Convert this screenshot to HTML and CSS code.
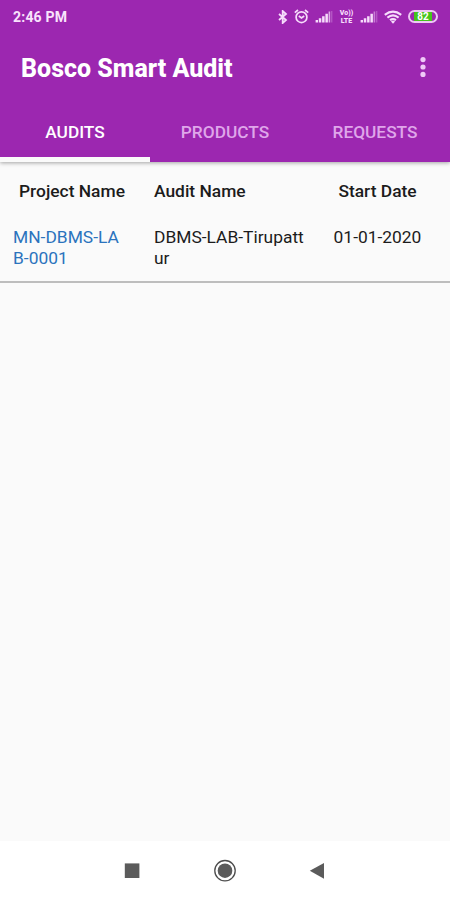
FILE: index.html
```html
<!DOCTYPE html>
<html lang="en">
<head>
    <meta charset="UTF-8">
    <title>Bosco Smart Audit</title>
    <link rel="stylesheet" href="styles.css">
</head>
<body>
    <header class="header">
        <div class="status-bar">
            <span class="time">2:46 PM</span>
            <div class="status-icons">
                <svg width="10" height="14" viewBox="0 0 10 14" fill="none" stroke="#f6dcfb" stroke-width="1.8"><path d="M1 4l7 6-3.3 3V1L8 4l-7 6"/></svg>
                <svg width="15" height="15" viewBox="0 0 15 15" fill="none" stroke="#f6dcfb" stroke-width="1.7"><circle cx="7.5" cy="8.2" r="5.4"/><path d="M.8 3.6L4 1M14.2 3.6L11 1M4.8 7l2.7 2 2.7-2"/></svg>
                <svg width="18" height="13" viewBox="0 0 18 13" fill="#f6dcfb"><path d="M.6 10h2.4v2.5H.6zM3.8 8.3h2.5v4.2H3.8zM7.1 6.3h2.5v6.2H7.1zM10.4 3.8h2.5v8.7h-2.5z"/><path d="M13.6 1.5h1.6v11h-1.6z" opacity=".75"/><path opacity=".25" d="M16 1h1.4v11.5H16z"/></svg>
                <span class="volte"><span>Vo))</span><span>LTE</span></span>
                <svg width="18" height="13" viewBox="0 0 18 13" fill="#f6dcfb"><path d="M.6 10h2.4v2.5H.6zM3.8 8.3h2.5v4.2H3.8zM7.1 6.3h2.5v6.2H7.1zM10.4 3.8h2.5v8.7h-2.5z"/><path d="M13.6 1.5h1.6v11h-1.6z" opacity=".5"/><path opacity=".25" d="M16 1h1.4v11.5H16z"/></svg>
                <svg width="18" height="14" viewBox="0 0 18 14" fill="none" stroke="#f6dcfb" stroke-width="2.1"><path d="M.8 4.8q8.2-6.4 16.4 0M3.4 7.6q5.6-4.5 11.2 0M6 10.2q3-2.3 6 0"/><path d="M9 13.8l-2.1-2.3q2.1-1.4 4.2 0z" fill="#f6dcfb" stroke="none"/></svg>
                <div class="battery"><span class="level">82</span></div>
            </div>
        </div>
        <div class="toolbar">
            <h1>Bosco Smart Audit</h1>
            <svg width="8" height="22" viewBox="0 0 8 22" fill="#efc9f7"><circle cx="4" cy="2.6" r="2.6"/><circle cx="4" cy="10" r="2.6"/><circle cx="4" cy="17.4" r="2.6"/></svg>
        </div>
        <nav class="tabs">
            <div class="tab active">AUDITS</div>
            <div class="tab">PRODUCTS</div>
            <div class="tab">REQUESTS</div>
        </nav>
    </header>
    <main class="content">
        <div class="row head">
            <div class="cell project">Project Name</div>
            <div class="cell audit">Audit Name</div>
            <div class="cell date">Start Date</div>
        </div>
        <div class="row">
            <a class="cell project">MN-DBMS-LA<br>B-0001</a>
            <div class="cell audit">DBMS-LAB-Tirupatt<br>ur</div>
            <div class="cell date">01-01-2020</div>
        </div>
    </main>
    <footer class="nav-bar">
        <svg width="24" height="24" viewBox="0 0 24 24"><path fill="#5b5b5b" d="M4.8 4.4h14.6V19H4.8z"/></svg>
        <svg width="24" height="24" viewBox="0 0 24 24"><circle cx="12" cy="11.7" r="10.2" fill="none" stroke="#4d4d4d" stroke-width="1.3"/><circle cx="12" cy="11.7" r="7.3" fill="#5b5b5b"/></svg>
        <svg width="24" height="24" viewBox="0 0 24 24"><path fill="#5b5b5b" d="M3.8 11.8L18 4v15.8z"/></svg>
    </footer>
</body>
</html>
```

FILE: styles.css
```css
* {
    box-sizing: border-box;
}

body {
    margin: 0;
    height: 900px;
    display: flex;
    flex-direction: column;
    background-color: #fafafa;
    font-family: Roboto, sans-serif;
    color: #1c1c1c;
}

svg {
    display: block;
    flex: none;
}

.header {
    height: 162px;
    background-color: #9c27b0;
    color: #fff;
    box-shadow: 0 1px 4px rgba(0, 0, 0, 0.35);
}

.status-bar {
    height: 33px;
    padding: 0 12px 0 13px;
    display: flex;
    align-items: center;
    justify-content: space-between;
}

.time {
    font-size: 14px;
    font-weight: 700;
    letter-spacing: 0.2px;
    color: #f9e3fc;
}

.status-icons {
    display: flex;
    align-items: center;
    gap: 6px;
}

.volte {
    width: 15px;
    display: flex;
    flex-direction: column;
    align-items: center;
    font-size: 7px;
    font-weight: 900;
    line-height: 8px;
    color: #f6dcfb;
}

.battery {
    width: 30px;
    height: 13px;
    padding: 0 4px;
    border: 2px solid #edc8f4;
    border-radius: 7px;
    display: flex;
}

.level {
    flex: 1;
    background-color: #45c41c;
    font-size: 10px;
    font-weight: 700;
    line-height: 9px;
    text-align: center;
}

.toolbar {
    height: 70px;
    padding: 0 23px 0 21px;
    display: flex;
    align-items: center;
    justify-content: space-between;
}

h1 {
    margin: 0;
    font-size: 25px;
    font-weight: 800;
}

.tabs {
    height: 59px;
    display: flex;
}

.tab {
    flex: 1;
    padding-top: 3px;
    display: flex;
    align-items: center;
    justify-content: center;
    font-size: 17.3px;
    font-weight: 500;
    color: #dfa6ea;
    border-bottom: 5px solid transparent;
}

.tab.active {
    color: #fff;
    border-bottom-color: #fafafa;
}

.content {
    height: 121px;
    padding: 19px 13px 0;
    border-bottom: 2px solid #bdbdbd;
}

.row {
    display: grid;
    grid-template-columns: 141px 164px 1fr;
    font-size: 17.4px;
    line-height: 21px;
}

.row.head {
    margin-bottom: 25px;
    font-weight: 500;
}

.head .project {
    padding-left: 6px;
}

.date {
    text-align: center;
}

a.project {
    color: #2b73bd;
}

.nav-bar {
    height: 59px;
    margin-top: auto;
    background-color: #fff;
    display: flex;
    align-items: center;
    justify-content: center;
    gap: 69px;
}
```
